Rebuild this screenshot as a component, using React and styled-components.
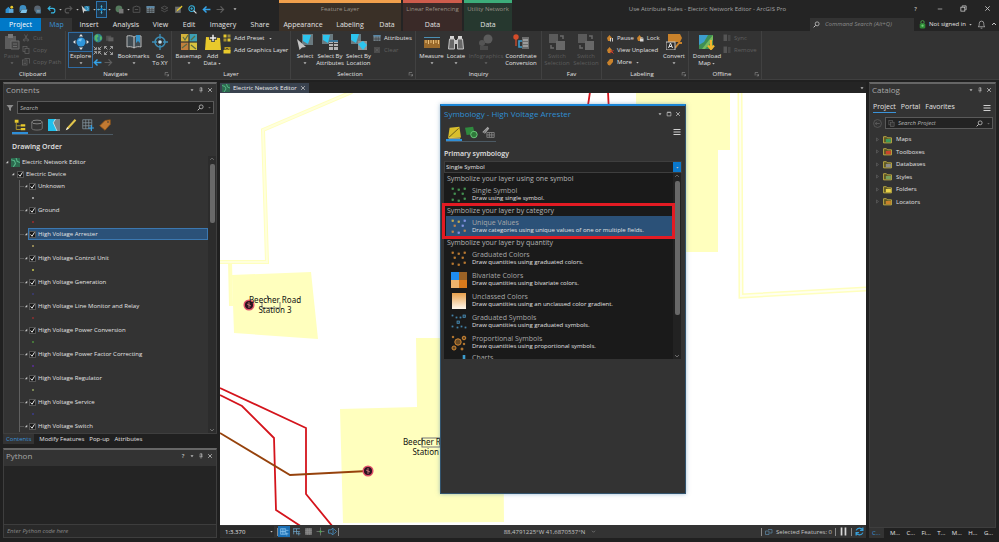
import React from 'react';
import styled, { createGlobalStyle, css } from 'styled-components';

const GlobalStyle = createGlobalStyle`
  * { box-sizing: border-box; }
  body { margin: 0; background: #202020; }
  body, button, input, select {
    font-family: "Open Sans", "Noto Sans", sans-serif;
    font-size: 6px;
    line-height: 8px;
    color: #e2e2e2;
  }
  button, input, select { background: none; border: 0; padding: 0; margin: 0; border-radius: 0; outline: 0; }
  a { color: inherit; text-decoration: none; }
  h2, h3, p, ul { margin: 0; padding: 0; font-weight: 400; list-style: none; }
  svg { display: block; flex: none; }
`;

/* ---------- palette ---------- */
const c = {
  dark: '#242424', panel: '#333333', line: '#454545', blue: '#007acc', link: '#3a92d8',
  sel: '#2b5178', yellow: '#e8c92c', cyan: '#36b5e0', orange: '#c9822b', green: '#3f9c5c',
  grey: '#8c8c8c', dim: '#565656', white: '#e2e2e2',
};

/* ---------- icons ---------- */
const Svg = ({ s = 10, children }) => (
  <svg width={s} height={s} viewBox="0 0 16 16" fill="none" aria-hidden="true">{children}</svg>
);

const squares = (color, size, pts) => pts.map(([x, y], i) => (
  <rect key={i} x={x} y={y} width={size} height={size} stroke={color} strokeWidth="0.7" fill={color} fillOpacity="0.4" />
));
const scatter = [[1, 1], [7, 2], [13, 1], [3, 6], [11, 6], [1, 12], [7, 13], [13, 11]];

const icons = {
  project: <><path d="M1 8l5-5 3 3v8H1z" fill="#2f8fd0" /><rect x="7" y="7" width="8" height="7" fill="#5fa8d8" /><circle cx="12" cy="4" r="2.5" fill={c.yellow} /></>,
  open: <><path d="M1 13V6a5 5 0 0 1 12 0v2H5z" fill="#3d8fc4" /><path d="M5 8h10l-2 6H2z" fill="#7cc0e8" /></>,
  save: <><circle cx="8" cy="7" r="6" fill="#596470" /><rect x="5" y="8" width="9" height="7" fill="#4b7896" /><path d="M7 10h5M7 12h5" stroke="#aaa" /></>,
  undo: <path d="M2 6h8a4 4 0 0 1 0 8H7M6 2L2 6l4 4" stroke={c.cyan} strokeWidth="2" />,
  redo: <path d="M14 6H6a4 4 0 0 0 0 8h3M10 2l4 4-4 4" stroke={c.dim} strokeWidth="2" />,
  arrowSel: <><rect x="6" y="2" width="9" height="9" fill="#2c89b5" /><path d="M10 2l3 5-4 4" stroke="#9fdcf5" /><path d="M1 1l9 9-4 .5L4 15z" fill="#ccc" /></>,
  pan: <><path d="M8 1v14M1 8h14" stroke="#9cc" strokeWidth="1.2" /><circle cx="8" cy="8" r="2.6" fill={c.blue} /><path d="M8 0l2 3H6zM8 16l2-3H6zM0 8l3-2v4zM16 8l-3-2v4z" fill={c.cyan} /></>,
  globeGrey: <><circle cx="7" cy="7" r="6" fill="#557a5d" /><rect x="7" y="7" width="8" height="8" fill="#777" /></>,
  box: <path d="M2 4l6-2 6 2v9H2zM5 8h6" stroke={c.dim} strokeWidth="1.6" />,
  table: <><rect x="1" y="2" width="14" height="12" fill="#7b8a93" /><rect x="1" y="2" width="14" height="3" fill="#5688aa" /><path d="M1 8.500h14M1 11.500h14M6 5v9M10.500 5v9" stroke="#333" /></>,
  layers: <path d="M8 2l6 3-6 3-6-3zM2 9l6 3 6-3" stroke={c.dim} strokeWidth="1.5" />,
  edit: <><rect x="2" y="3" width="10" height="11" fill="#6d6f70" /><path d="M4 12l2-4 8-7 1 2-8 7z" fill={c.yellow} /></>,
  zoomIn: <><circle cx="6.500" cy="6.500" r="5" stroke={c.cyan} strokeWidth="1.8" /><path d="M10 10l5 5" stroke="#ddd" strokeWidth="2" /><path d="M4 6.500h5M6.500 4v5" stroke={c.cyan} strokeWidth="1.4" /></>,
  left: <path d="M15 8H3M8 2.500L2.500 8 8 13.500" stroke="#35a3e8" strokeWidth="2.6" />,
  right: <path d="M1 8h12M8 2.500l5.500 5.500L8 13.500" stroke="#5d5d5d" strokeWidth="2.2" />,
  caret: <path d="M4 6h8l-4 5z" fill="#bbb" />,
  caretDim: <path d="M4 6h8l-4 5z" fill="#666" />,
  paste: <><rect x="1" y="2" width="11" height="13" fill="#5c5c5c" /><rect x="4" y="0" width="5" height="4" fill="#777" /><path d="M7 7h8v8H7z" fill="#444" stroke="#6c6c6c" /><path d="M9 10h4M9 12.500h4" stroke="#6c6c6c" /></>,
  cut: <><path d="M5 1l5 9M11 1L6 10" stroke="#666" strokeWidth="1.4" /><circle cx="4.500" cy="12" r="2" stroke="#666" strokeWidth="1.4" /><circle cx="11.500" cy="12" r="2" stroke="#666" strokeWidth="1.4" /></>,
  copy: <><rect x="2" y="1" width="8" height="10" stroke="#666" strokeWidth="1.4" /><rect x="6" y="5" width="8" height="10" fill="#333" stroke="#666" strokeWidth="1.4" /></>,
  copyPath: <><rect x="1" y="4" width="9" height="10" stroke="#666" strokeWidth="1.4" /><path d="M5 1h10v10M3 8h5M3 11h5" stroke="#666" strokeWidth="1.4" /></>,
  explore: <><circle cx="8" cy="8" r="4.500" fill="#2f96dc" /><path d="M5 6.500a4 4 0 0 1 4-2l-1 3z" fill="#7cc6f2" /><path d="M8 0l2 2.400H6zM8 16l2-2.400H6zM0 8l2.400-2v4zM16 8l-2.400-2v4z" fill="#e4e4e4" /></>,
  globe: <><circle cx="8" cy="8" r="7" fill="#2f7f8c" /><path d="M3 4l4-2 2 3-3 3 2 4-2 2-3-4zM11 5l3 1v4l-3 2z" fill="#58b868" /></>,
  globeOff: <><rect x="2" y="3" width="9" height="9" fill="#4f4f4f" /><rect x="6" y="6" width="9" height="7" fill="#606060" /></>,
  arrowsIn: <path d="M1 1l5 5M2 6h4V2M15 1l-5 5M14 6h-4V2M1 15l5-5M2 10h4v4M15 15l-5-5M14 10h-4v4" stroke="#b5b5b5" strokeWidth="1.5" />,
  arrowsOut: <path d="M6 6L1 1M1 5V1h4M10 6l5-5M15 5V1h-4M6 10l-5 5M1 11v4h4M10 10l5 5M15 11v4h-4" stroke="#b5b5b5" strokeWidth="1.5" />,
  book: <><path d="M8 3c-2-1.500-5-1.500-7-1v11c2-.6 5-.5 7 1 2-1.500 5-1.600 7-1V2c-2-.5-5-.5-7 1z" stroke="#b9b9b9" strokeWidth="1" fill="#404a50" /><path d="M8 3v11" stroke="#ccc" /><path d="M10 1h4v8l-2-2-2 2z" fill="#3794c8" /></>,
  goXY: <><circle cx="8" cy="8" r="5" stroke="#3d8fb8" strokeWidth="1.500" /><circle cx="8" cy="8" r="1.800" fill="#bfe1f2" /><path d="M8 0v5M8 11v5M0 8h5M11 8h5" stroke="#3d8fb8" strokeWidth="1.300" /></>,
  basemap: <><rect x="0" y="0" width="7.400" height="7.400" fill="#d3b23a" /><rect x="8.600" y="0" width="7.400" height="7.400" fill="#3c9fb4" /><rect x="0" y="8.600" width="7.400" height="7.400" fill="#c07f3c" /><rect x="8.600" y="8.600" width="7.400" height="7.400" fill="#d8c23e" /><path d="M2 3l2 3 3-5M10 6l4-4M1 14l5-4M10 11l5 4" stroke="#5b6b45" strokeWidth="1.200" /></>,
  addData: <><path d="M1 3l14 1 1 12H0z" fill={c.yellow} /><path d="M8 0v8M4 4h8" stroke="#333" strokeWidth="3.400" /><path d="M8 .8v6.400M4.800 4h6.400" stroke="#eee" strokeWidth="1.500" /></>,
  addPreset: <><rect x="1" y="1" width="6" height="6" fill={c.yellow} /><rect x="9" y="1" width="6" height="6" fill="#9a8a3d" /><rect x="1" y="9" width="6" height="6" fill="#a58e2d" /><rect x="9" y="9" width="6" height="6" fill={c.yellow} /></>,
  addGraphics: <><path d="M3 2h12v9H3z" fill="#b99b22" /><path d="M1 8h14v7H1z" fill={c.yellow} /><path d="M5 8l3-4 3 4" stroke="#333" strokeWidth="1.500" /></>,
  select: <><path d="M5 0h11v11H5z" fill="#6a7a80" /><path d="M6 1h8l-3 9-5-3z" fill="#2cc4ee" /><path d="M0 5l9 8-4 .5L2.500 16z" fill="#c4c4c4" /></>,
  selectAttr: <><path d="M0 0h11v10H0z" fill="#6a7a80" /><path d="M1 1h7l-2 8-5-3z" fill="#2cc4ee" /><path d="M7 6h9v10H7z" fill="#b5b5b5" /><path d="M7 9.500h9M7 12.500h9M11.500 7v9" stroke="#3e3e3e" /><path d="M7 6h9v2H7z" fill="#3c789c" /></>,
  selectLoc: <><path d="M0 0h10v10H0z" fill="#6a7a80" /><path d="M0 0h8l-3 9-5-3z" fill="#2cc4ee" /><path d="M7 7h9v9H7z" fill="#909090" /><path d="M7 10l5-3 4 4-4 5z" fill="#2cc4ee" /></>,
  clear: <><rect x="2" y="2" width="12" height="12" fill="#4c4c4c" /><path d="M5 5l6 6M11 5l-6 6" stroke="#666" /></>,
  measure: <><rect x="0" y="6" width="16" height="8" fill="#9a6a2c" /><path d="M2 6v3M4.500 6v4M7 6v3M9.500 6v4M12 6v3M14.500 6v4" stroke="#eac07c" /><path d="M0 3.500h16" stroke="#4c90b4" /></>,
  locate: <><path d="M2 2h4v3H2zM10 2h4v3h-4z" fill="#d4d4d4" /><path d="M1.500 5h5v10H.500zM9.500 5h5l1 10h-6z" fill="#686868" stroke="#c4c4c4" /><rect x="6" y="6" width="4" height="4" fill="#c4c4c4" /></>,
  infographics: <><circle cx="10" cy="5" r="4.500" fill="#5c5c5c" /><circle cx="4" cy="9" r="3" fill="#545454" /><path d="M2 12h8v4H2z" fill="#4b4b4b" /></>,
  convCoord: <><circle cx="3" cy="3" r="2.700" fill="#d44c2a" /><path d="M3 5v7" stroke="#d44c2a" strokeWidth="1.300" /><path d="M9 7H6v6h3" stroke="#3d9ccc" strokeWidth="1.600" /><path d="M9 3h7v12H9z" fill="#6c6c6c" /><path d="M10 6h5M10 9h5M10 12h5" stroke="#c8c8c8" /></>,
  switchSel: <><rect x="0" y="0" width="9" height="9" fill="#5b5b5b" /><rect x="7" y="7" width="9" height="9" fill="#686868" /><path d="M11 2h3v3M2 11v3h3" stroke="#6a6a6a" strokeWidth="1.500" /></>,
  pauseLabel: <><path d="M2 8l5-6 5 6-4 6H4z" fill={c.orange} /><path d="M9 8v7M13 8v7" stroke="#ddd" strokeWidth="1.800" /></>,
  lockLabel: <><path d="M2 8l5-6 5 6-4 6H4z" fill={c.orange} /><rect x="8" y="9" width="7" height="6" fill="#d8d8d8" /><path d="M9.500 9V7h4v2" stroke="#ddd" /></>,
  unplaced: <><path d="M2 8l5-6 5 6-4 6H4z" fill={c.orange} /><path d="M8 8l7 7M15 8l-7 7" stroke="#e23c2a" strokeWidth="1.800" /></>,
  moreLabel: <path d="M2 9l6-7h6v6l-6 7-4-1z" fill={c.orange} />,
  convert: <><path d="M2 0h12l2 4-2 4H2z" fill={c.orange} /><path d="M9 14l4-5h3" stroke={c.orange} strokeWidth="2" /><rect x="0" y="8" width="9" height="8" fill="#2f2f2f" stroke="#c8c8c8" /><path d="M2.500 14l2-5 2 5M3.200 12.500h2.600" stroke="#e6e6e6" /></>,
  download: <><rect x="0" y="1" width="14" height="14" fill="#3f8f52" /><path d="M0 1h9L5 8l-5 3z" fill="#3d9dcd" /><path d="M14 1v5L6 15H3z" fill="#78bb5c" /><path d="M12 6v8M9 11.500l3 3.500 3-3.500" stroke="#f0b52e" strokeWidth="2.200" /></>,
  sync: <><rect x="1" y="1" width="7" height="13" fill="#555" /><path d="M10 4h5M10 8h5M10 12h5" stroke="#5a5a5a" strokeWidth="2" /></>,
  launcher: <path d="M3 12V4h8M7 8l5 5M12 8v5H7" stroke="#999" strokeWidth="1.400" />,
  search: <><circle cx="9.500" cy="6.500" r="4.500" stroke="#ccc" strokeWidth="1.700" /><path d="M6 10l-4.500 4.500" stroke="#ccc" strokeWidth="2.200" /></>,
  user: <><circle cx="8" cy="4" r="3" stroke="#4cae50" strokeWidth="1.500" /><rect x="3" y="6" width="10" height="9" rx="2" fill="#2d8a35" /><circle cx="8" cy="10" r="2" fill="#74d07a" /></>,
  bell: <path d="M2 12c2-1 2-4 2-6a4 4 0 0 1 8 0c0 2 0 5 2 6zM6.500 14.500h3" stroke="#bbb" strokeWidth="1.300" />,
  up: <path d="M3 10.500L8 5.500l5 5" stroke="#ddd" strokeWidth="2.600" />,
  upThin: <path d="M3 10.500L8 5.500l5 5" stroke="#888" strokeWidth="1.800" />,
  downThin: <path d="M3 5.500l5 5 5-5" stroke="#999" strokeWidth="1.800" />,
  close: <path d="M3 3l10 10M13 3L3 13" stroke="#c8c8c8" strokeWidth="2" />,
  min: <path d="M2 8h12" stroke="#ccc" strokeWidth="1.800" />,
  restore: <><rect x="2" y="5" width="9" height="9" stroke="#ddd" strokeWidth="1.600" /><path d="M5 4V2h9v9h-2" stroke="#ddd" strokeWidth="1.600" /></>,
  maxi: <path d="M3 4h10v9H3zM3 3h10" stroke="#c8c8c8" strokeWidth="1.800" />,
  pin: <path d="M4 10h8M5.500 2h5v8M5.500 2v8M8 10v5M9.500 2v8" stroke="#c8c8c8" strokeWidth="1.400" />,
  menu: <path d="M1 3h14M1 8h14M1 13h14" stroke="#d0d0d0" strokeWidth="2.200" />,
  funnel: <path d="M1 2h14l-5 6v6l-4-2V8z" fill="#8c8c8c" />,
  tree: <><rect x="1" y="1" width="5" height="4" fill={c.yellow} /><path d="M3 5v9h6M3 9h6" stroke="#b8a030" strokeWidth="1.200" /><rect x="9" y="7" width="6" height="3" fill={c.yellow} /><rect x="9" y="12" width="6" height="3" fill={c.yellow} /></>,
  cylinder: <><ellipse cx="8" cy="4" rx="7" ry="2.500" stroke="#8c8c8c" strokeWidth="1.200" /><path d="M1 4v8.500c0 3 14 3 14 0V4" stroke="#777" strokeWidth="1.200" /></>,
  selMap: <><rect x="0" y="0" width="16" height="16" fill="#7c8488" /><path d="M0 0h10l-3 5 5 11H0z" fill="#20c0ec" /><path d="M10 0L7 5l5 11" stroke="#fff" strokeWidth=".8" /></>,
  pencil: <><path d="M1 15l2-4L13 0l2 2L5 13z" fill="#e2c54c" /><path d="M1 15l2-4 2 2z" fill="#eee" /></>,
  gridPlus: <><path d="M1 1h12v12H1zM5 1v12M9 1v12M1 5h12M1 9h12" stroke="#8496a2" /><path d="M12.500 8v8M8.500 12h8" stroke="#38a0e0" strokeWidth="1.600" /></>,
  tag: <><path d="M1 9l7-7 7-1v6l-7 8z" fill="#c27a32" stroke="#8f5418" /><circle cx="12" cy="4" r="1.100" fill="#333" /></>,
  mapGreen: <><rect x="0" y="0" width="16" height="16" fill="#2c6a4e" /><path d="M0 3l6 2 2 5-4 6M9 0l2 6 5 2" stroke="#55b487" strokeWidth="2" /></>,
  symPrimary: <><path d="M2 2l12-1 2 13-16 1z" fill="#d9bf2c" /><path d="M1 14L13 3" stroke="#6b5f1c" strokeWidth="1.200" /><path d="M1 15h14" stroke="#f0e7a0" /></>,
  symVary: <><path d="M0 2l10-1 2 9-10 1z" fill="#2f8a3e" /><circle cx="11" cy="10.500" r="4" fill="#2f7a3a" stroke="#6cc77a" strokeWidth="1.200" /></>,
  symAdv: <><path d="M1 8l6-6 1 1-5 6" stroke="#a5a5a5" strokeWidth="1.400" /><path d="M6 8h9v6H6zM6 11h9M9 8v6M12 8v6" stroke="#8a8a8a" /></>,
  single: squares('#4ba35a', 1.6, scatter),
  unique: <>{squares('#d8b64a', 1.6, scatter.slice(0, 2))}{squares('#8f9cf0', 1.6, [scatter[2], scatter[4], scatter[6]])}{squares('#d08a48', 1.6, [scatter[3], scatter[5], scatter[7]])}</>,
  gradColors: squares('#d08734', 1.6, scatter),
  gradSym: <>{squares('#4a92bd', 1, [[1, 1], [5, 3], [9, 3], [1, 12], [6, 13], [10, 12], [14, 13]])}{squares('#4a92bd', 2.4, [[6, 7], [12, 1]])}</>,
  bivariate: <><rect width="8" height="8" fill="#1e8cf0" /><rect x="8" width="8" height="8" fill="#9a6226" /><rect y="8" width="8" height="8" fill="#f0b46c" /><rect x="8" y="8" width="8" height="8" fill="#d87a1c" /></>,
  unclassed: <><defs><linearGradient id="ramp" x1="0" y1="0" x2="0" y2="1"><stop offset="0" stopColor="#e8a04c" /><stop offset="1" stopColor="#fff8ee" /></linearGradient></defs><rect x="1" width="14" height="16" fill="url(#ramp)" /></>,
  prop: <g stroke="#d08734" strokeWidth="1" fill="#6a4a24"><circle cx="7" cy="7" r="3.200" /><circle cx="13" cy="3" r="1.800" /><circle cx="2" cy="2" r=".8" /><circle cx="3" cy="13" r="2" /><circle cx="13" cy="9" r=".8" /><circle cx="11" cy="14" r="1" /></g>,
  charts: <path d="M9 16V5M13 16V1" stroke="#3d9ccc" strokeWidth="2.600" />,
  backCircle: <><circle cx="8" cy="8" r="7" stroke="#666" strokeWidth="1.200" /><path d="M12 8H4M7 5L4 8l3 3" stroke="#666" strokeWidth="1.300" /></>,
  triRight: <path d="M5 3l6 5-6 5z" stroke="#777" strokeWidth="1.500" />,
  triOpen: <path d="M13 3v10H3z" fill="#c8c8c8" />,
  check: <path d="M3.500 8l3.500 4 5.500-9" stroke="#f0f0f0" strokeWidth="2.200" />,
  snap: <path d="M1 3h9v10H1zM10 6h5M4 3v10M7 3v10M1 8h9M12 10v5M10 12h5" stroke="#8fc8f0" strokeWidth="1.200" />,
  snap2: <path d="M2 3h12M3 3v10M8 3v10M2 8h12M12 9v6M9 12h6" stroke="#6fa4c8" strokeWidth="1.300" />,
  gridGrey: <><rect x="2" y="2" width="12" height="12" fill="#777" /><path d="M2 6h12M2 10h12M6 2v12M10 2v12" stroke="#909090" /></>,
  plusGreen: <><path d="M8 1v14M1 8h14" stroke="#888" strokeWidth="1.200" /><circle cx="8" cy="8" r="2" fill="#4cae50" /></>,
  arrowsBlue: <path d="M1 5h4l4-3v12l-4-3H1zM11 4l4 4-4 4" stroke="#4a92c4" strokeWidth="1.500" />,
  selFeat: <path d="M1 6h7v7H1zM6 3h8v7H9" stroke="#5c86a4" strokeWidth="1.500" />,
  pause: <path d="M4.500 1v14M11.500 1v14" stroke="#d6d6d6" strokeWidth="3" />,
  refresh: <path d="M14 6A6.500 6.500 0 0 0 2 6M2 10a6.500 6.500 0 0 0 12 0M14 1v5h-5M2 15v-5h5" stroke="#36a0dc" strokeWidth="2.200" />,
};
const folder = (tint) => <><path d="M1 3h5l2 2h7v9H1z" stroke="#d6c04a" strokeWidth="1.400" fill="#5c5624" /><path d="M5 7h9v6H5z" fill={tint} /></>;
const Icon = ({ name, s }) => <Svg s={s}>{icons[name]}</Svg>;

/* ---------- shell ---------- */
const Page = styled.div`
  height: 100vh; display: flex; flex-direction: column; overflow: hidden; background: #202020;
`;
const Header = styled.header`display: flex; height: 31px; flex: none; background: ${c.dark};`;
const HeadLeft = styled.div`flex: 0 0 276px; display: flex; flex-direction: column; justify-content: space-between;`;
const QuickBar = styled.div`display: flex; align-items: center; height: 18px; padding-left: 3px;`;
const QuickItem = styled.div`display: flex; align-items: center; flex: none; width: ${(p) => (p.$caret ? 17 : 14)}px;`;
const IconButton = styled.button`
  display: flex; align-items: center; justify-content: center;
  width: ${(p) => p.$w || 12}px; height: ${(p) => p.$h || 12}px; flex: none;
  ${(p) => p.$on && css`border: 1px solid #2f76b0; background: #1e3446;`}
  ${(p) => p.$fill && css`background: #1a6fb4;`}
`;
const Tabs = styled.nav`display: flex; height: 13px; color: ${c.white}; justify-content: ${(p) => p.$j || 'flex-start'};`;
const RibbonTab = styled.a`
  display: flex; align-items: center; justify-content: center; font-size: 7px; white-space: nowrap;
  width: ${(p) => p.$w}px;
  ${(p) => p.$kind === 'project' && css`background: #0079c8; color: #fff;`}
  ${(p) => p.$kind === 'active' && css`background: ${c.panel}; color: ${c.link};`}
`;
const Context = styled.section`
  flex: 0 0 ${(p) => p.$w}px; margin-left: 2px; border-top: 3px solid ${(p) => p.$c}; background: ${(p) => p.$bg};
  display: flex; flex-direction: column; justify-content: space-between; text-align: center; color: #9a9287; white-space: nowrap;
`;
const ContextName = styled.span`padding-top: 2px;`;
const HeadRight = styled.div`flex: 1; display: flex; flex-direction: column;`;
const TitleRow = styled.div`display: flex; height: 17px; align-items: center; padding-right: 6px; gap: 13px;`;
const AppTitle = styled.div`flex: 1; text-align: center; color: #a4a4a4; white-space: nowrap; padding-left: 6px;`;
const SignRow = styled.div`display: flex; height: 14px; align-items: center; justify-content: flex-end; padding-right: 1px; gap: 2px;`;
const CommandSearch = styled.label`
  display: flex; align-items: center; gap: 5px; width: 104px; height: 13px; padding-left: 3px; background: #333; margin-right: 2px;
  input { flex: 1; min-width: 0; font-style: italic; }
  input::placeholder { color: #8a8a8a; }
`;
const SignIn = styled.button`display: flex; align-items: center; gap: 2px; white-space: nowrap;`;

/* ---------- ribbon ---------- */
const Ribbon = styled.div`display: flex; height: 49px; flex: none; background: ${c.panel}; border-bottom: 1px solid #3f3f3f;`;
const Group = styled.section`
  flex: 0 0 ${(p) => p.$w}px; display: flex; flex-direction: column; border-right: 1px solid #414141;
`;
const GroupBody = styled.div`display: flex; flex: 1; padding: 1px 0 0 ${(p) => p.$pad || 0}px;`;
const GroupFoot = styled.div`
  display: flex; height: 10px; align-items: center; padding: 0 1px;
  span { flex: 1; text-align: center; }
`;
const BigBtn = styled.button`
  width: ${(p) => p.$w}px; height: 36px; display: flex; flex-direction: column; align-items: center; padding-top: 1px;
  line-height: 7px; color: ${(p) => (p.$off ? '#5c5c5c' : c.white)}; flex: none;
  border: 1px solid ${(p) => (p.$on ? '#2f6ca4' : 'transparent')};
  ${(p) => p.$on && css`background: linear-gradient(#26394b 18px, #2f6ca4 18px, #2f6ca4 19px, #333 19px);`}
`;
const BigLabel = styled.span`display: flex; flex-direction: column; align-items: center; margin-top: 3px; white-space: nowrap;`;
const LastLine = styled.span`display: flex; align-items: center;`;
const SmallCol = styled.div`display: flex; flex-direction: column; flex: none; width: ${(p) => p.$w}px;`;
const SmallRow = styled.div`display: flex; gap: 2px;`;
const SmallBtn = styled.button`
  display: flex; align-items: center; gap: 3px; height: 12px; white-space: nowrap; color: ${(p) => (p.$off ? '#606060' : c.white)};
`;

const Big = ({ icon, lines, w, off, on, caret }) => (
  <BigBtn $w={w} $off={off} $on={on}>
    <Icon name={icon} s={16} />
    <BigLabel>
      {lines.map((l, i) => (
        <LastLine key={l}>{l}{caret && lines.length > 1 && i === 1 && <Icon name="caret" s={5} />}</LastLine>
      ))}
      {caret && lines.length === 1 && <Icon name={off ? 'caretDim' : 'caret'} s={6} />}
    </BigLabel>
  </BigBtn>
);
const Small = ({ icon, label, off, caret, s = 8 }) => (
  <SmallBtn $off={off} aria-label={label || icon}>
    <Icon name={icon} s={s} />{label}{caret && <Icon name="caret" s={5} />}
  </SmallBtn>
);
const RibbonGroup = ({ name, w, pad, launch, children }) => (
  <Group $w={w}>
    <GroupBody $pad={pad}>{children}</GroupBody>
    <GroupFoot><span>{name}</span>{launch && <Icon name="launcher" s={6} />}</GroupFoot>
  </Group>
);

/* ---------- docks ---------- */
const Workspace = styled.main`display: flex; flex: 1; min-height: 0; padding: 2px 3px 4px; gap: 3px;`;
const Dock = styled.aside`display: flex; flex-direction: column; flex: 0 0 ${(p) => p.$w}px; min-height: 0;`;
const Panel = styled.section`
  display: flex; flex-direction: column; flex: 1; min-height: 0;
  background: ${c.panel}; border: 1px solid #3e3e3e; border-top: 2px solid #666;
`;
const PanelHead = styled.div`display: flex; align-items: center; height: 12px; flex: none; padding: 0 2px; gap: 1px;`;
const PanelTitle = styled.h2`flex: 1; font-size: 8px; color: #a8a8a8;`;
const SearchRow = styled.div`display: flex; align-items: center; gap: 3px; padding: 0 2px; margin-top: ${(p) => p.$top || 0}px; flex: none;`;
const SearchBox = styled.label`
  flex: 1; min-width: 0; display: flex; align-items: center; height: ${(p) => p.$h || 13}px; border: 1px solid #5a5a5a; background: #232323; padding: 0 1px 0 2px; gap: 3px;
  input { flex: 1; min-width: 0; font-style: italic; }
  input::placeholder { color: #b8b8b8; }
`;
const ToolStrip = styled.div`
  display: flex; gap: 1px; margin: 3px 0 0 ${(p) => p.$m}px; align-self: flex-start; border-bottom: 1px solid #4c5a64; flex: none;
`;
const ToolTab = styled.button`
  width: 16px; height: 17px; display: flex; justify-content: center; padding-top: 2px;
  border-bottom: 2px solid ${(p) => (p.$on ? '#2f8fd8' : 'transparent')};
`;
const Heading = styled.h3`font-size: 7px; font-weight: 600; padding: 8px 0 5px 8px; line-height: 8px; flex: none;`;
const TreeArea = styled.div`display: flex; flex: 1; min-height: 0; overflow: hidden;`;
const Tree = styled.ul`flex: 1; min-width: 0; overflow: hidden;`;
const TreeRow = styled.li`
  display: flex; align-items: center; height: 12px; gap: 2px; padding-left: ${(p) => p.$pad}px; white-space: nowrap;
`;
const Layers = styled.ul`margin-left: 15px; border-left: 1px solid #606060;`;
const LayerRow = styled.li`display: flex; align-items: center; height: 12px;`;
const Twig = styled.span`width: 4px; height: 1px; background: #555;`;
const LayerLabel = styled.label`
  flex: 1; display: flex; align-items: center; gap: 2px; height: 12px; white-space: nowrap;
  border: 1px solid ${(p) => (p.$on ? '#3c78b0' : 'transparent')}; background: ${(p) => (p.$on ? c.sel : 'none')};
`;
const Check = styled.input`
  appearance: none; width: 7px; height: 7px; background: #191919; border: 1px solid #555; flex: none;
`;
const Tick = styled.span`
  display: grid; flex: none;
  > * { grid-area: 1 / 1; }
  svg { pointer-events: none; }
  input:not(:checked) + svg { visibility: hidden; }
`;
const Dot = styled.li`
  height: 12px; padding: 5px 0 0 12px;
  &::before { content: ''; display: block; width: 2px; height: 2px; border-radius: 1px; background: ${(p) => p.$c}; }
`;
const Scroll = styled.div`
  width: 8px; display: flex; flex-direction: column; align-items: center; flex: none; background: ${(p) => p.$bg || '#2c2c2c'};
`;
const Thumb = styled.div`width: 5px; height: ${(p) => p.$h}px; border-radius: 2px; background: #686868; margin: 2px 0 auto;`;
const BottomTabs = styled.nav`
  display: flex; height: 10px; flex: none; align-items: center; padding-right: 3px;
  justify-content: ${(p) => (p.$spread ? 'space-between' : 'flex-start')}; gap: ${(p) => (p.$spread ? 0 : 5)}px;
`;
const BottomTab = styled.a`
  line-height: 10px; white-space: nowrap;
  ${(p) => p.$on && css`color: ${c.link}; background: #333; padding: 0 3px;`}
`;
const PythonSlot = styled.div`display: flex; flex-direction: column; height: 94px; padding-top: 4px; flex: none;`;
const PyOut = styled.div`flex: 1; background: #242424; border-bottom: 1px solid #3d3d3d; margin-top: 4px;`;
const PyInput = styled.input`height: 12px; padding-left: 3px; font-style: italic; background: #292929; flex: none; &::placeholder { color: #8a8a8a; }`;

const CheckBox = ({ id }) => (
  <Tick><Check type="checkbox" defaultChecked id={id} /><Icon name="check" s={7} /></Tick>
);

/* ---------- map ---------- */
const MapPane = styled.section`flex: 1; min-width: 0; display: flex; flex-direction: column; position: relative;`;
const MapTabs = styled.div`display: flex; height: 11px; align-items: stretch; justify-content: space-between; flex: none; background: ${c.dark};`;
const MapTab = styled.div`display: flex; align-items: center; gap: 3px; margin-top: 1px; padding: 0 3px 0 2px; background: #39424f; color: #eee; white-space: nowrap;`;
const MapCanvas = styled.div`flex: 1; min-height: 0; background: #fff; svg { width: 100%; height: 100%; }`;
const StatusBar = styled.div`display: flex; align-items: center; height: 13px; flex: none; background: ${c.panel}; white-space: nowrap; color: #c4c4c4; padding-right: 2px;`;
const StatusSide = styled.div`flex: 1; display: flex; align-items: center; gap: ${(p) => p.$gap || 0}px; justify-content: ${(p) => (p.$end ? 'flex-end' : 'flex-start')};`;
const ScaleSelect = styled.label`
  display: flex; align-items: center; width: 54px; height: 11px; background: #2a2a2a; padding-left: 5px; margin-right: 3px;
  select { appearance: none; flex: 1; }
`;
const Rule = styled.i`width: 1px; height: 8px; background: #8a8a8a;`;
const Coords = styled.div`display: flex; align-items: center; gap: 6px; padding-left: 16px;`;

const MapDrawing = () => (
  <svg viewBox="220 93 646 432" preserveAspectRatio="xMinYMin slice" aria-label="Electric network map">
    <g fill="none">
      <path d="M352 92L263 130l4 132h-47M230 262l1 44" stroke="#ffffbe" strokeWidth="4" />
      <path d="M352 92L263 130l4 132h-47" stroke="#ffffdc" strokeWidth="2" />
      <path d="M740 92l1 204 125-7" stroke="#ffffbe" strokeWidth="5" />
      <path d="M740 92l1 204 125-7" stroke="#fffff0" strokeWidth="2" />
    </g>
    <g fill="#ffffbe">
      <path d="M232 275l79-3 7 67-84-6z" />
      <path d="M340 409l77-2-1-69h60v60h27l1 124-161 1z" />
      <path d="M636 93h94v57h-12v102H636z" />
    </g>
    <g fill="none" stroke="#d4141c" strokeWidth="1.800">
      <path d="M220 388l86 40v66l27 33" />
      <path d="M220 395l22 11 32 32 2 72 26 17" />
      <path d="M590 92l-3 20M608 92l1 20" />
    </g>
    <path d="M220 433l70 42 78-4" fill="none" stroke="#96420c" strokeWidth="1.800" />
    <g fill="none" stroke="#777" strokeWidth="1">
      <path d="M262 302v6h18v-6M267 295l2 6" />
      <rect x="422" y="438" width="18" height="9" />
    </g>
    <g fill="#2c1220" stroke="#e0506a" strokeWidth="1.500">
      <circle cx="249" cy="305" r="4.800" />
      <circle cx="368" cy="471" r="4.800" />
    </g>
    <path d="M249 302v6M247 304l4 2M368 468v6M366 470l4 2" stroke="#d88" strokeWidth=".8" />
    <g fontFamily="'Noto Sans', 'Open Sans', sans-serif" fontSize="8" fill="#111" textAnchor="middle">
      <text x="275" y="303">Beecher Road</text>
      <text x="275" y="313">Station 3</text>
      <text x="429" y="445">Beecher Road</text>
      <text x="429" y="455">Station 3</text>
    </g>
  </svg>
);

/* ---------- symbology window ---------- */
const Dialog = styled.section`
  position: absolute; left: 220px; top: 22px; width: 246px; height: 390px; display: flex; flex-direction: column;
  background: ${c.panel}; border: 1px solid #33546e; border-top: 2px solid #1b86d6; box-shadow: 0 0 4px rgba(60, 120, 170, 0.5); padding: 0 3px;
`;
const DialogHead = styled.div`display: flex; align-items: center; height: 15px; gap: 1px;`;
const DialogTitle = styled.h2`flex: 1; font-size: 8px; color: #2f8fd4; white-space: nowrap;`;
const DialogTools = styled.div`display: flex; justify-content: space-between; align-items: center; padding-right: 1px;`;
const FieldLabel = styled.label`font-size: 7px; font-weight: 600; padding: 8px 0 3px; line-height: 8px;`;
const Combo = styled.div`
  display: flex; height: 12px; background: #222; border: 1px solid #3e3e3e; align-items: stretch; flex: none;
  select { appearance: none; flex: 1; padding-left: 1px; }
`;
const ComboArrow = styled.span`width: 8px; background: #0a78cc; display: flex; align-items: center; justify-content: center;`;
const List = styled.div`display: flex; height: 186px; margin-right: 1px; overflow: clip; overflow-clip-margin: 2px; background: #1a1a1a;`;
const Options = styled.div`flex: 1; min-width: 0;`;
const OptGroup = styled.h3`height: 11px; font-size: 7px; line-height: 11px; padding-left: 3px; color: #b4b4b4; white-space: nowrap;`;
const Option = styled.div`
  display: flex; align-items: center; gap: 5px; height: 21px; padding-left: 5px; margin-left: 2px; white-space: nowrap;
  background: ${(p) => (p.$on ? c.sel : 'none')};
`;
const OptName = styled.p`font-size: 7px; line-height: 8px; color: #a8a8a8;`;
const OptDesc = styled.p`line-height: 7px; color: #e0e0e0;`;
const Marked = styled.div`outline: 3px solid #e31b23; outline-offset: -1px; position: relative;`;
const LastOption = styled.div`height: 6px; overflow: hidden;`;

const Opt = ({ icon, name, desc, on }) => (
  <Option $on={on} role="option" aria-selected={!!on}>
    <Icon name={icon} s={16} />
    <div><OptName>{name}</OptName>{desc && <OptDesc>{desc}</OptDesc>}</div>
  </Option>
);
const ChartsRow = styled(Option)`
  align-items: flex-start; padding-top: 1px;
`;

/* ---------- catalog ---------- */
const CatTabs = styled.nav`display: flex; gap: 5px; align-items: center; padding: 2px 4px 0 3px; height: 21px; a:last-of-type { margin-right: auto; }`;
const CatTab = styled.a`font-size: 7px; line-height: 10px; border-bottom: 1px solid ${(p) => (p.$on ? '#3a92d8' : 'transparent')};`;
const CatList = styled.ul`display: flex; flex-direction: column; height: 75px; margin-top: 4px;`;
const CatItem = styled.li`flex: 1; display: flex; align-items: center; gap: 4px; padding-left: 5px; svg:first-child { margin-right: -1px; }`;

const layers = [
  ['Unknown', '#b8b8b8'], ['Ground', '#a02c2c'], ['High Voltage Arrester', '#b0a060'], ['High Voltage Control Unit', '#c8c850'],
  ['High Voltage Generation', '#3c3c78'], ['High Voltage Line Monitor and Relay', '#903030'], ['High Voltage Power Conversion', '#4c8c3c'],
  ['High Voltage Power Factor Correcting', '#5c2c9c'], ['High Voltage Regulator', '#90a060'], ['High Voltage Service', '#3c3c8c'],
  ['High Voltage Switch', null],
];
const catalog = [['Maps', '#3f9c5c'], ['Toolboxes', '#c8442c'], ['Databases', '#8c8c8c'], ['Styles', '#7aa05c'], ['Folders', '#e8d24a'], ['Locators', '#c9822b']];
const quick = [
  ['project'], ['open'], ['save'], ['undo', 1], ['redo', 1], ['arrowSel', 1], ['pan', 1], ['globeGrey', 1],
  ['box'], ['table'], ['layers'], ['edit'], ['zoomIn'], ['left'], ['right'],
];

const PanelButtons = ({ help, max }) => (
  <>
    {help && <IconButton $w={8} $h={8}>?</IconButton>}
    <IconButton $w={8} $h={8} aria-label="Options"><Icon name="caret" s={6} /></IconButton>
    <IconButton $w={8} $h={8} aria-label={max ? 'Maximize' : 'Auto hide'}><Icon name={max ? 'maxi' : 'pin'} s={6} /></IconButton>
    <IconButton $w={8} $h={8} aria-label="Close"><Icon name="close" s={6} /></IconButton>
  </>
);

export default function App() {
  return (
    <Page>
      <GlobalStyle />
      <Header>
        <HeadLeft>
          <QuickBar>
            {quick.map(([n, caret]) => (
              <QuickItem key={n} $caret={caret}>
                <IconButton $w={n === 'pan' ? 11 : 13} $h={17} $on={n === 'pan'} aria-label={n}><Icon name={n} s={9} /></IconButton>
                {caret && <Icon name="caret" s={5} />}
              </QuickItem>
            ))}
            <IconButton $w={14} aria-label="customize"><Icon name="caret" s={6} /></IconButton>
          </QuickBar>
          <Tabs>
            <RibbonTab href="#" $w={41} $kind="project">Project</RibbonTab>
            <RibbonTab href="#" $w={31} $kind="active">Map</RibbonTab>
            <RibbonTab href="#" $w={34}>Insert</RibbonTab>
            <RibbonTab href="#" $w={40}>Analysis</RibbonTab>
            <RibbonTab href="#" $w={29}>View</RibbonTab>
            <RibbonTab href="#" $w={28}>Edit</RibbonTab>
            <RibbonTab href="#" $w={40}>Imagery</RibbonTab>
            <RibbonTab href="#" $w={34}>Share</RibbonTab>
          </Tabs>
        </HeadLeft>
        <Context $w={122} $c="#f2a04c" $bg="#3a3027">
          <ContextName>Feature Layer</ContextName>
          <Tabs $j="center">
            <RibbonTab href="#" $w={48}>Appearance</RibbonTab>
            <RibbonTab href="#" $w={46}>Labeling</RibbonTab>
            <RibbonTab href="#" $w={28}>Data</RibbonTab>
          </Tabs>
        </Context>
        <Context $w={59} $c="#cf5c4c" $bg="#3a2a28">
          <ContextName>Linear Referencing</ContextName>
          <Tabs $j="center"><RibbonTab href="#" $w={30}>Data</RibbonTab></Tabs>
        </Context>
        <Context $w={48} $c="#3cae7a" $bg="#26382f">
          <ContextName>Utility Network</ContextName>
          <Tabs $j="center"><RibbonTab href="#" $w={30}>Data</RibbonTab></Tabs>
        </Context>
        <HeadRight>
          <TitleRow>
            <AppTitle>Use Attribute Rules - Electric Network Editor - ArcGIS Pro</AppTitle>
            <IconButton $w={11}>?</IconButton>
            <IconButton $w={11} aria-label="Minimize"><Icon name="min" s={6} /></IconButton>
            <IconButton $w={11} aria-label="Restore"><Icon name="restore" s={7} /></IconButton>
            <IconButton $w={11} aria-label="Close"><Icon name="close" s={7} /></IconButton>
          </TitleRow>
          <SignRow>
            <CommandSearch><Icon name="search" s={7} /><input placeholder="Command Search (Alt+Q)" aria-label="Command search" /></CommandSearch>
            <SignIn><Icon name="user" s={9} />Not signed in<Icon name="caret" s={5} /></SignIn>
            <IconButton $w={12} aria-label="Notifications"><Icon name="bell" s={9} /></IconButton>
            <IconButton $w={9} aria-label="Collapse ribbon"><Icon name="up" s={6} /></IconButton>
          </SignRow>
        </HeadRight>
      </Header>

      <Ribbon>
        <RibbonGroup name="Clipboard" w={66} pad={1}>
          <Big icon="paste" lines={['Paste']} w={21} off caret />
          <SmallCol $w={40}>
            <Small icon="cut" label="Cut" off /><Small icon="copy" label="Copy" off /><Small icon="copyPath" label="Copy Path" off />
          </SmallCol>
        </RibbonGroup>
        <RibbonGroup name="Navigate" w={106} pad={2} launch>
          <Big icon="explore" lines={['Explore']} w={25} on caret />
          <SmallCol $w={24}>
            <SmallRow><Small icon="globe" s={10} /><Small icon="globeOff" s={9} /></SmallRow>
            <SmallRow><Small icon="arrowsIn" s={9} /><Small icon="arrowsOut" s={9} /></SmallRow>
            <SmallRow><Small icon="left" s={9} /><Small icon="right" s={9} /></SmallRow>
          </SmallCol>
          <Big icon="book" lines={['Bookmarks']} w={33} caret />
          <Big icon="goXY" lines={['Go', 'To XY']} w={20} />
        </RibbonGroup>
        <RibbonGroup name="Layer" w={119} pad={3}>
          <Big icon="basemap" lines={['Basemap']} w={27} caret />
          <Big icon="addData" lines={['Add', 'Data']} w={21} caret />
          <SmallCol $w={64}>
            <Small icon="addPreset" label="Add Preset" caret /><Small icon="addGraphics" label="Add Graphics Layer" />
          </SmallCol>
        </RibbonGroup>
        <RibbonGroup name="Selection" w={125} pad={3} launch>
          <Big icon="select" lines={['Select']} w={22} caret />
          <Big icon="selectAttr" lines={['Select By', 'Attributes']} w={28} />
          <Big icon="selectLoc" lines={['Select By', 'Location']} w={29} />
          <SmallCol $w={38}>
            <Small icon="table" label="Attributes" /><Small icon="clear" label="Clear" off />
          </SmallCol>
        </RibbonGroup>
        <RibbonGroup name="Inquiry" w={126} pad={3}>
          <Big icon="measure" lines={['Measure']} w={25} caret />
          <Big icon="locate" lines={['Locate']} w={24} caret />
          <Big icon="infographics" lines={['Infographics']} w={36} off caret />
          <Big icon="convCoord" lines={['Coordinate', 'Conversion']} w={34} />
        </RibbonGroup>
        <RibbonGroup name="Fav" w={60}>
          <Big icon="switchSel" lines={['Switch', 'Selection']} w={30} off />
          <Big icon="switchSel" lines={['Switch', 'Selection']} w={28} off />
        </RibbonGroup>
        <RibbonGroup name="Labeling" w={87} pad={4} launch>
          <SmallCol $w={55}>
            <SmallRow><Small icon="pauseLabel" label="Pause" /><Small icon="lockLabel" label="Lock" /></SmallRow>
            <Small icon="unplaced" label="View Unplaced" />
            <Small icon="moreLabel" label="More" caret />
          </SmallCol>
          <Big icon="convert" lines={['Convert']} w={26} caret />
        </RibbonGroup>
        <RibbonGroup name="Offline" w={73} pad={2} launch>
          <Big icon="download" lines={['Download', 'Map']} w={32} caret />
          <SmallCol $w={36}>
            <Small icon="sync" label="Sync" off /><Small icon="sync" label="Remove" off />
          </SmallCol>
        </RibbonGroup>
      </Ribbon>

      <Workspace>
        <Dock $w={214}>
          <Panel>
            <PanelHead><PanelTitle>Contents</PanelTitle><PanelButtons /></PanelHead>
            <SearchRow $top={5}>
              <Icon name="funnel" s={8} />
              <SearchBox><input placeholder="Search" aria-label="Search contents" /><Icon name="search" s={7} /><Icon name="caretDim" s={5} /></SearchBox>
            </SearchRow>
            <ToolStrip $m={8}>
              {['tree', 'cylinder', 'selMap', 'pencil', 'gridPlus', 'tag'].map((n, i) => (
                <ToolTab key={n} $on={i === 0} aria-label={n}><Icon name={n} s={12} /></ToolTab>
              ))}
            </ToolStrip>
            <Heading>Drawing Order</Heading>
            <TreeArea>
              <Tree>
                <TreeRow $pad={1}><Icon name="triOpen" s={4} /><Icon name="mapGreen" s={9} />Electric Network Editor</TreeRow>
                <TreeRow $pad={7}><Icon name="triOpen" s={4} /><CheckBox id="device" /><label htmlFor="device">Electric Device</label></TreeRow>
                <li>
                  <Layers>
                    {layers.map(([name, col]) => (
                      <React.Fragment key={name}>
                        <LayerRow>
                          <Twig /><Icon name="triOpen" s={4} />
                          <LayerLabel $on={name === 'High Voltage Arrester'}><CheckBox />{name}</LayerLabel>
                        </LayerRow>
                        {col && <Dot $c={col} />}
                      </React.Fragment>
                    ))}
                  </Layers>
                </li>
              </Tree>
              <Scroll><Icon name="upThin" s={6} /><Thumb $h={59} /><Icon name="downThin" s={6} /></Scroll>
            </TreeArea>
          </Panel>
          <BottomTabs>
            <BottomTab href="#" $on>Contents</BottomTab><BottomTab href="#">Modify Features</BottomTab>
            <BottomTab href="#">Pop-up</BottomTab><BottomTab href="#">Attributes</BottomTab>
          </BottomTabs>
          <PythonSlot>
            <Panel>
              <PanelHead><PanelTitle>Python</PanelTitle><PanelButtons help /></PanelHead>
              <PyOut />
              <PyInput placeholder="Enter Python code here" aria-label="Python code" />
            </Panel>
          </PythonSlot>
        </Dock>

        <MapPane>
          <MapTabs>
            <MapTab><Icon name="mapGreen" s={8} />Electric Network Editor<Icon name="close" s={6} /></MapTab>
            <IconButton $w={8} $h={11} aria-label="Views"><Icon name="caret" s={6} /></IconButton>
          </MapTabs>
          <MapCanvas><MapDrawing /></MapCanvas>
          <StatusBar>
            <StatusSide>
              <ScaleSelect><select aria-label="Map scale" defaultValue="1:3.370"><option>1:3.370</option></select><Icon name="caret" s={5} /></ScaleSelect>
              <Rule />
              <IconButton $w={12} $h={11} $fill aria-label="Snapping"><Icon name="snap" s={9} /></IconButton>
              {['snap2', 'gridGrey', 'plusGreen', 'arrowsBlue'].map((n) => (
                <IconButton key={n} $w={12} aria-label={n}><Icon name={n} s={9} /></IconButton>
              ))}
              <Rule />
            </StatusSide>
            <Coords>88,4791225°W 41,6870537°N<Icon name="downThin" s={5} /></Coords>
            <StatusSide $end $gap={3}>
              <Rule /><Icon name="selFeat" s={8} />Selected Features: 0<Rule /><Icon name="pause" s={9} /><Rule /><Icon name="refresh" s={9} />
            </StatusSide>
          </StatusBar>

          <Dialog role="dialog" aria-labelledby="sym-title">
            <DialogHead><DialogTitle id="sym-title">Symbology - High Voltage Arrester</DialogTitle><PanelButtons max /></DialogHead>
            <DialogTools>
              <ToolStrip $m={2}>
                {['symPrimary', 'symVary', 'symAdv'].map((n, i) => (
                  <ToolTab key={n} $on={i === 0} aria-label={n}><Icon name={n} s={13} /></ToolTab>
                ))}
              </ToolStrip>
              <Icon name="menu" s={8} />
            </DialogTools>
            <FieldLabel htmlFor="primary">Primary symbology</FieldLabel>
            <Combo>
              <select id="primary" defaultValue="Single Symbol"><option>Single Symbol</option></select>
              <ComboArrow><Icon name="caret" s={5} /></ComboArrow>
            </Combo>
            <List>
              <Options role="listbox" aria-label="Primary symbology">
                <OptGroup>Symbolize your layer using one symbol</OptGroup>
                <Opt icon="single" name="Single Symbol" desc="Draw using single symbol." />
                <Marked>
                  <OptGroup>Symbolize your layer by category</OptGroup>
                  <Opt icon="unique" name="Unique Values" desc="Draw categories using unique values of one or multiple fields." on />
                </Marked>
                <OptGroup>Symbolize your layer by quantity</OptGroup>
                <Opt icon="gradColors" name="Graduated Colors" desc="Draw quantities using graduated colors." />
                <Opt icon="bivariate" name="Bivariate Colors" desc="Draw quantities using bivariate colors." />
                <Opt icon="unclassed" name="Unclassed Colors" desc="Draw quantities using an unclassed color gradient." />
                <Opt icon="gradSym" name="Graduated Symbols" desc="Draw quantities using graduated symbols." />
                <Opt icon="prop" name="Proportional Symbols" desc="Draw quantities using proportional symbols." />
                <LastOption>
                  <ChartsRow role="option" aria-selected={false}><Icon name="charts" s={16} /><OptName>Charts</OptName></ChartsRow>
                </LastOption>
              </Options>
              <Scroll $bg="#222"><Icon name="upThin" s={6} /><Thumb $h={134} /><Icon name="downThin" s={6} /></Scroll>
            </List>
          </Dialog>
        </MapPane>

        <Dock $w={127}>
          <Panel>
            <PanelHead><PanelTitle>Catalog</PanelTitle><PanelButtons /></PanelHead>
            <CatTabs>
              <CatTab href="#" $on>Project</CatTab><CatTab href="#">Portal</CatTab><CatTab href="#">Favorites</CatTab>
              <Icon name="menu" s={8} />
            </CatTabs>
            <SearchRow>
              <IconButton $w={10} $h={10} aria-label="Back"><Icon name="backCircle" s={9} /></IconButton>
              <SearchBox $h={12}><Icon name="copy" s={7} /><input placeholder="Search Project" aria-label="Search project" /><Icon name="search" s={7} /><Icon name="caretDim" s={5} /></SearchBox>
            </SearchRow>
            <CatList>
              {catalog.map(([name, tint]) => (
                <CatItem key={name}><Icon name="triRight" s={5} /><Svg s={9}>{folder(tint)}</Svg>{name}</CatItem>
              ))}
            </CatList>
          </Panel>
          <BottomTabs $spread>
            <BottomTab href="#" $on>C...</BottomTab>
            {['M...', 'C...', 'Fi...', 'T...', 'M...', 'H...', 'G...'].map((t, i) => <BottomTab key={i} href="#">{t}</BottomTab>)}
          </BottomTabs>
        </Dock>
      </Workspace>
    </Page>
  );
}
